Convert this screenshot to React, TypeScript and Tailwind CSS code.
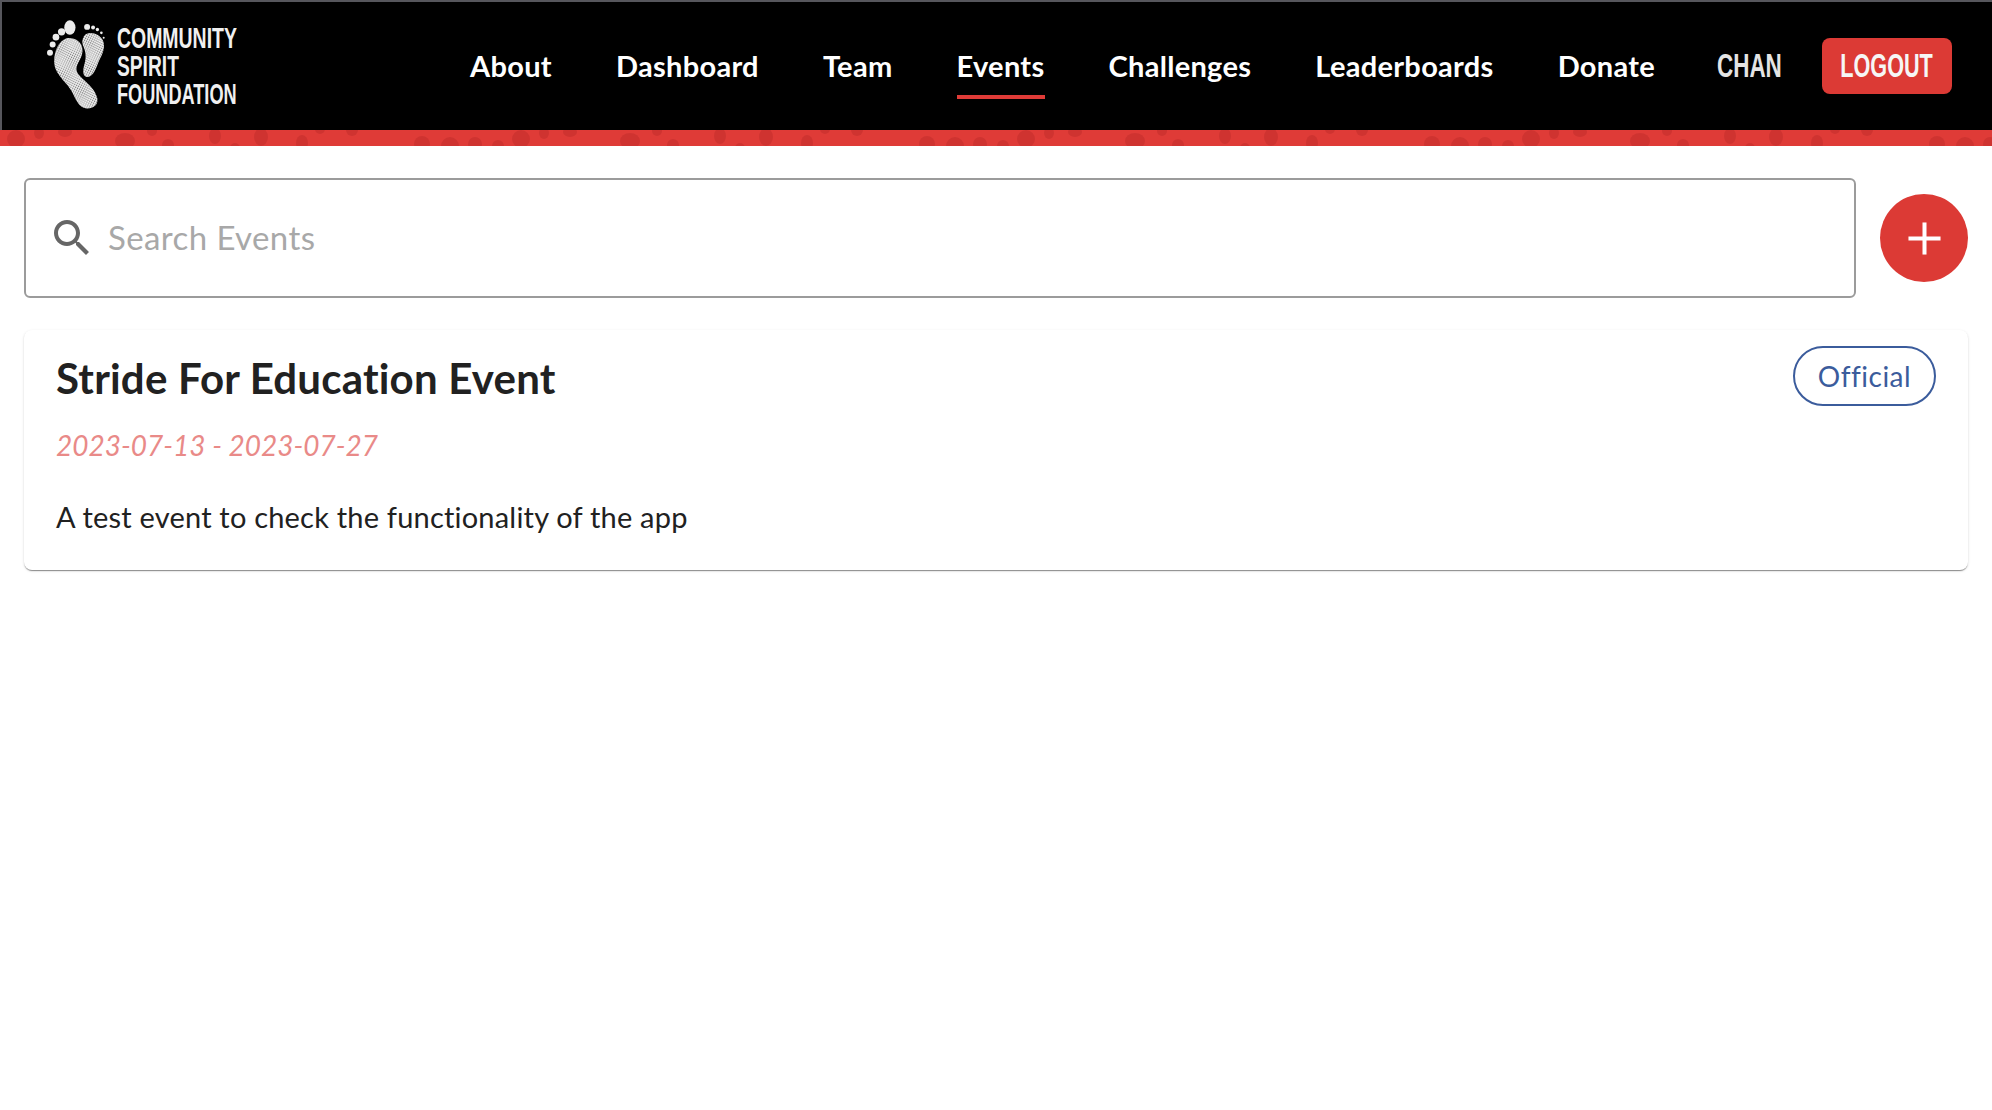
import { Plus } from "lucide-react";

const NAV_LINKS = ["About", "Dashboard", "Team", "Events", "Challenges", "Leaderboards", "Donate"];

// dark blotches in the red strip, one 505px tile
const BLOTCHES = [
  [16, 9, 9, 9], [39, 3, 5, 6], [65, 2, 7, 5], [125, 11, 10, 8], [152, 1, 5, 5],
  [168, 15, 6, 6], [215, 6, 6, 8], [235, 18, 5, 5], [261, 7, 7, 9], [302, 13, 6, 8],
  [320, -1, 5, 5], [352, 0, 6, 6], [422, 14, 8, 8], [450, 16, 9, 9], [475, 14, 7, 7], [498, 16, 6, 6],
];

function FootLogo() {
  return (
    <svg viewBox="21 15 178 270" className="w-[59px] h-[90px] shrink-0 mb-[5px]">
      <defs>
        <pattern id="stipple" width="7" height="7" patternUnits="userSpaceOnUse" patternTransform="rotate(25)">
          <rect width="7" height="7" fill="#f6f6f6" />
          <circle cx="1.75" cy="1.75" r="1.4" fill="#000" />
          <circle cx="5.25" cy="5.25" r="1.1" fill="#111" />
        </pattern>
      </defs>
      <g fill="url(#stipple)">
        <path d="M80 72C108 70 130 85 128 112C126 136 108 150 110 168C112 190 162 212 172 250C178 272 162 286 140 284C116 282 108 255 94 230C82 208 58 192 47 165C36 138 46 84 80 72Z" />
        <path d="M132 66C146 48 180 58 190 80C198 100 188 122 178 140C170 160 162 186 145 189C128 191 128 170 134 150C140 130 138 115 132 100C126 88 126 76 132 68Z" />
      </g>
      <g fill="#ececec">
        <ellipse cx="90" cy="40" rx="17" ry="22" />
        <circle cx="65" cy="53" r="11" />
        <circle cx="48" cy="69" r="10" />
        <circle cx="38" cy="91" r="9" />
        <circle cx="30" cy="116" r="9" />
        <circle cx="142" cy="38" r="9" />
        <circle cx="160" cy="40" r="6" />
        <circle cx="173" cy="46" r="5" />
        <circle cx="185" cy="56" r="4" />
        <circle cx="192" cy="71" r="3" />
      </g>
    </svg>
  );
}

function StripBand() {
  return (
    <svg className="block w-full h-4" aria-hidden="true">
      <defs>
        <pattern id="blotches" width="505" height="16" patternUnits="userSpaceOnUse">
          <rect width="505" height="16" fill="#df3b37" />
          {BLOTCHES.map(([cx, cy, rx, ry]) => (
            <ellipse key={cx} cx={cx} cy={cy} rx={rx} ry={ry} fill="#cf3330" />
          ))}
        </pattern>
      </defs>
      <rect width="100%" height="16" fill="url(#blotches)" />
    </svg>
  );
}

export default function App() {
  return (
    <div className="min-h-[1110px] bg-white font-['Lato',sans-serif] text-[#212121]">
      <header>
        <div className="h-[130px] bg-black border-t-2 border-l-2 border-[#56565c] flex items-center pl-[45px] pr-[40px]">
          <FootLogo />
          <div className="ml-[11px] w-[119px] whitespace-nowrap font-['Liberation_Sans',sans-serif] font-bold text-[30px] leading-[28px] text-[#f0f0f0]">
            <div className="origin-left scale-x-[0.648]">COMMUNITY</div>
            <div className="origin-left scale-x-[0.64]">SPIRIT</div>
            <div className="origin-left scale-x-[0.605]">FOUNDATION</div>
          </div>

          <nav className="ml-auto flex items-center gap-16 text-white text-[29px] tracking-[0.3px] font-bold">
            {NAV_LINKS.map((link) => (
              <a
                key={link}
                className={`h-[66px] flex items-center border-b-4 pt-1 ${
                  link === "Events" ? "border-[#df3b37]" : "border-transparent"
                }`}
              >
                {link}
              </a>
            ))}
          </nav>

          <span className="ml-[62px] w-[63px] whitespace-nowrap origin-left scale-x-[0.68] font-['Liberation_Sans',sans-serif] font-bold text-[33px] text-[#e4e4e4]">
            CHAN
          </span>
          <button className="ml-[42px] w-[130px] h-14 rounded-lg bg-[#dc3a35] flex items-center justify-center font-['Liberation_Sans',sans-serif] font-bold text-[33px] text-[#f6f6f6]">
            <span className="scale-x-[0.655]">LOGOUT</span>
          </button>
        </div>
        <StripBand />
      </header>

      <main className="px-6 pt-8">
        <div className="flex items-center gap-6">
          <label className="flex-1 h-[120px] rounded-md border-2 border-[#9b9b9b] flex items-center pl-[22px]">
            <svg viewBox="0 0 24 24" className="w-12 h-12 fill-[#666666] shrink-0">
              <path d="M15.5 14h-.79l-.28-.27C15.41 12.59 16 11.11 16 9.5 16 5.91 13.09 3 9.5 3S3 5.91 3 9.5 5.91 16 9.5 16c1.61 0 3.09-.59 4.23-1.57l.27.28v.79l5 4.99L20.49 19l-4.99-5zm-6 0C7.01 14 5 11.99 5 9.5S7.01 5 9.5 5 14 7.01 14 9.5 11.99 14 9.5 14z" />
            </svg>
            <input
              placeholder="Search Events"
              className="ml-3 flex-1 outline-none text-[33px] tracking-[0.4px] placeholder:text-[#a8a8a8]"
            />
          </label>
          <button className="w-[88px] h-[88px] rounded-full bg-[#dc3a35] flex items-center justify-center text-white">
            <Plus size={55} strokeWidth={1.75} strokeLinecap="butt" />
          </button>
        </div>

        <section className="mt-8 h-60 rounded-lg bg-white px-8 pt-4 shadow-[0_2px_1px_-1px_rgba(0,0,0,0.3),0_1px_1px_0_rgba(0,0,0,0.14),0_1px_3px_0_rgba(0,0,0,0.12)]">
          <div className="flex items-start justify-between">
            <h2 className="text-[42px] tracking-[0.2px] leading-[64px] font-bold">Stride For Education Event</h2>
            <span className="w-[143px] h-[60px] rounded-full border-2 border-[#3b5c9c] text-[#3b5c9c] text-[28px] tracking-[0.5px] flex items-center justify-center">
              Official
            </span>
          </div>
          <p className="mt-[17px] text-[28px] leading-9 italic text-[#e98a88]">2023-07-13 - 2023-07-27</p>
          <p className="mt-[36px] text-[29px] tracking-[0.2px] leading-9">A test event to check the functionality of the app</p>
        </section>
      </main>
    </div>
  );
}
